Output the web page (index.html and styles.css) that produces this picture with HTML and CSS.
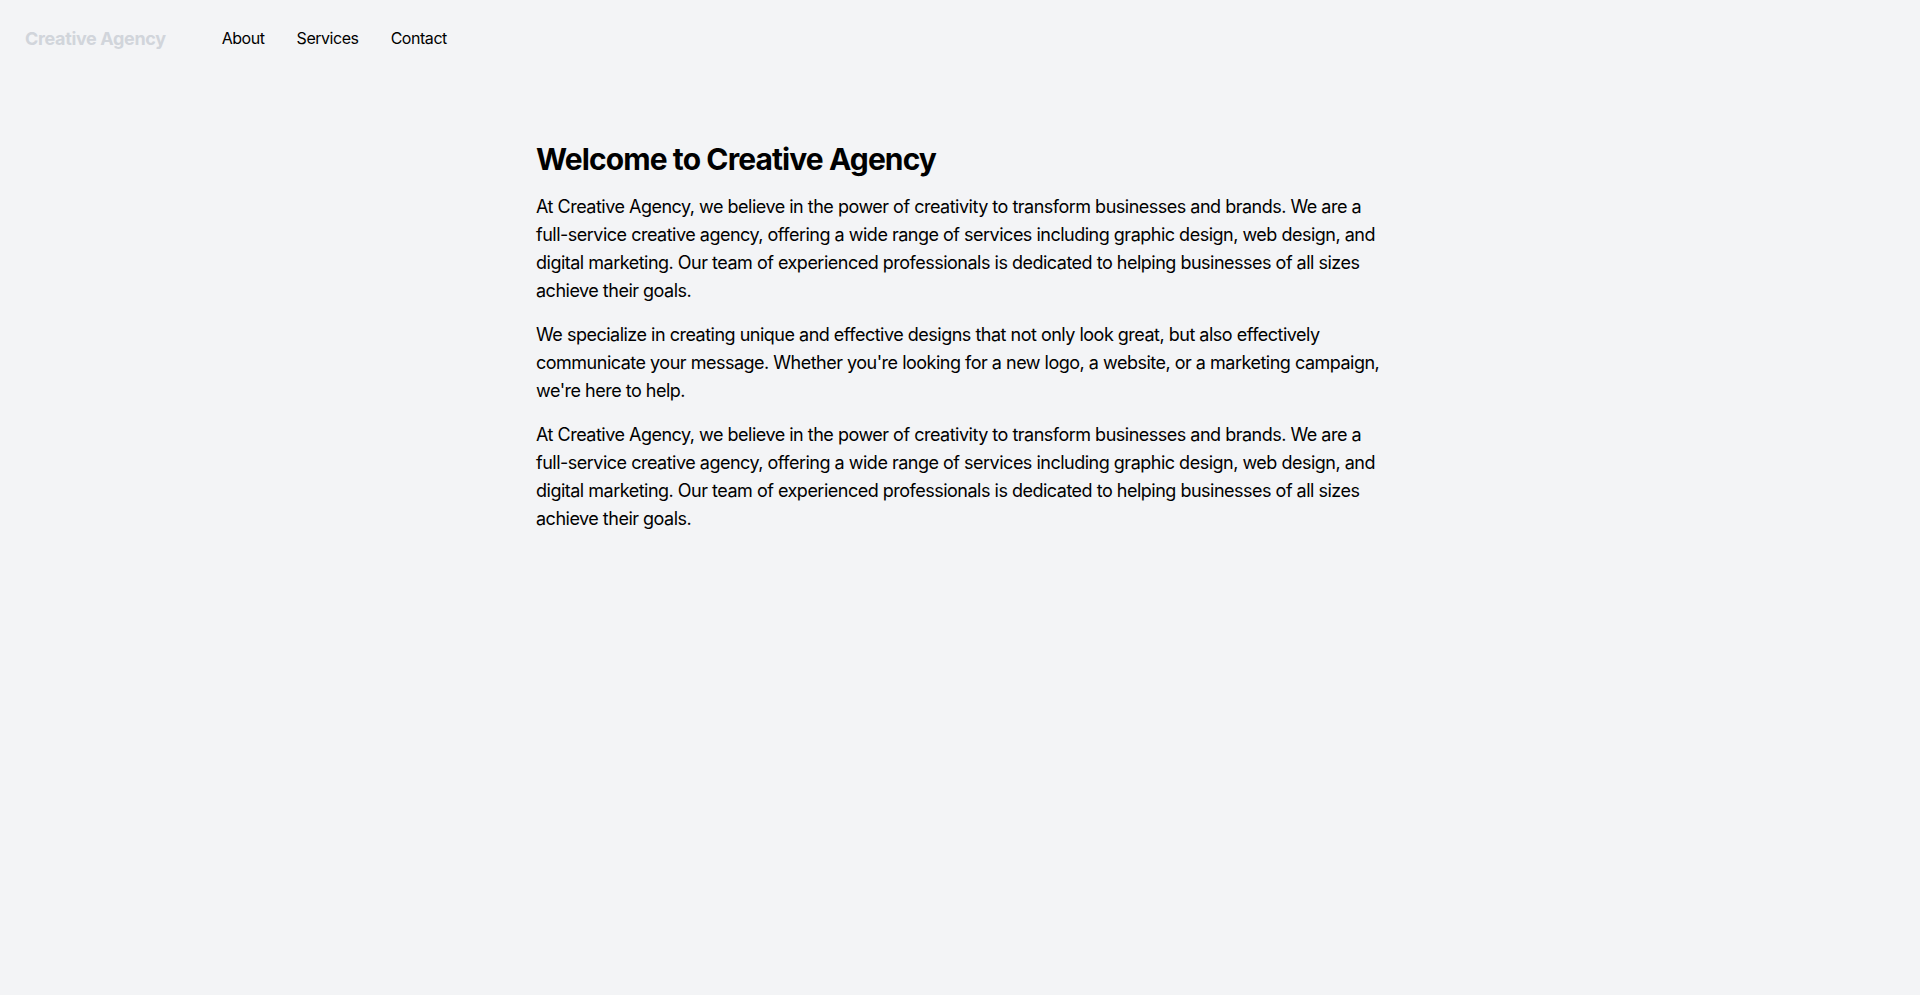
FILE: index.html
```html
<!DOCTYPE html>
<html lang="en">
<head>
<meta charset="utf-8">
<title>Creative Agency</title>
<link rel="stylesheet" href="styles.css">
</head>
<body>
<header class="header">
  <div class="logo">Creative Agency</div>
  <nav class="nav">
    <a href="#" class="nav-link">About</a>
    <a href="#" class="nav-link">Services</a>
    <a href="#" class="nav-link">Contact</a>
  </nav>
</header>
<main class="main">
  <h1 class="title">Welcome to Creative Agency</h1>
  <p class="text">At Creative Agency, we believe in the power of creativity to transform businesses and brands. We are a full-service creative agency, offering a wide range of services including graphic design, web design, and digital marketing. Our team of experienced professionals is dedicated to helping businesses of all sizes achieve their goals.</p>
  <p class="text">We specialize in creating unique and effective designs that not only look great, but also effectively communicate your message. Whether you're looking for a new logo, a website, or a marketing campaign, we're here to help.</p>
  <p class="text">At Creative Agency, we believe in the power of creativity to transform businesses and brands. We are a full-service creative agency, offering a wide range of services including graphic design, web design, and digital marketing. Our team of experienced professionals is dedicated to helping businesses of all sizes achieve their goals.</p>
</main>
</body>
</html>
```
FILE: styles.css
```css
* { box-sizing: border-box; }
html, body { margin: 0; padding: 0; }
body {
  background: #f3f4f6;
  color: #000;
  font-family: Inter, "Noto Sans", sans-serif;
  min-height: 995px;
}
.header {
  display: flex;
  align-items: center;
  height: 76px;
  padding: 0 24px 0 25px;
}
.logo {
  font-weight: 700;
  font-size: 18px;
  letter-spacing: -0.35px;
  color: #d1d5db;
  margin-right: 56px;
}
.nav {
  display: flex;
  gap: 32px;
}
.nav-link {
  color: #000;
  text-decoration: none;
  font-size: 16px;
  letter-spacing: -0.45px;
}
.main {
  max-width: 896px;
  margin: 0 auto;
  padding: 65px 24px 0;
}
.title {
  font-size: 30px;
  line-height: 36px;
  font-weight: 700;
  letter-spacing: -0.9px;
  margin: 0 0 16px;
}
.text {
  font-size: 18px;
  line-height: 28px;
  letter-spacing: -0.5px;
  margin: 0 0 16px;
}
```
